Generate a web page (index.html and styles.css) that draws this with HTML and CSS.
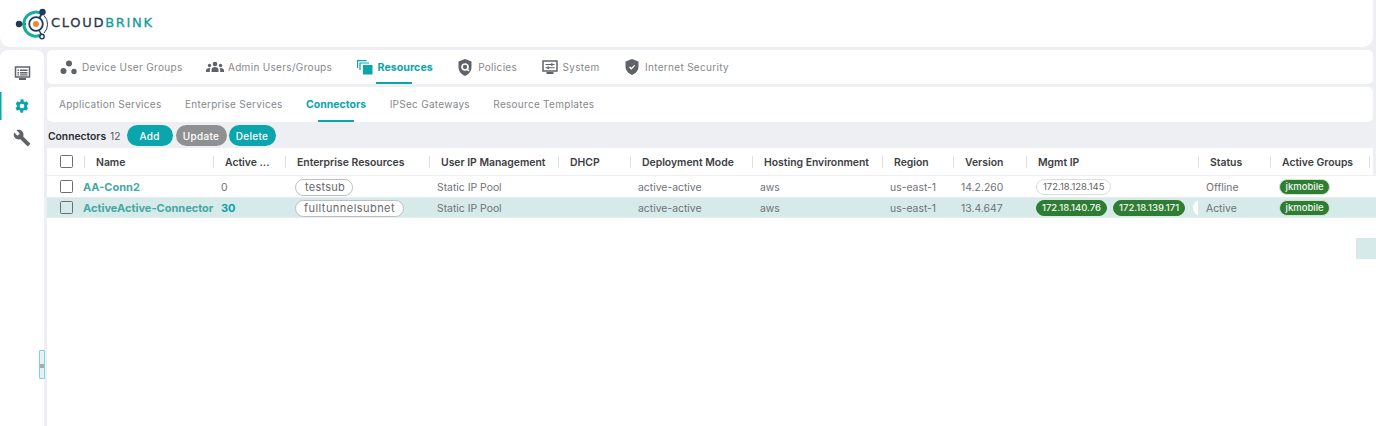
FILE: index.html
```html
<!DOCTYPE html>
<html lang="en">
<head>
<meta charset="utf-8">
<title>Cloudbrink Connectors</title>
<link rel="stylesheet" href="styles.css">
</head>
<body>
<header class="topbar">
  <div class="logo">
    <svg class="logo-mark" width="36" height="32" viewBox="0 0 36 32">
      <path d="M4 16H11" stroke="#1f3a5a" stroke-width="1.800"/>
      <circle cx="4" cy="16" r="3.200" fill="#1f3a5a"/>
      <path d="M28 6.500A12 12 0 1 0 27 26.400" fill="none" stroke="#14ad9f" stroke-width="3"/>
      <path d="M29 7.500A12.500 12.500 0 0 1 29 25" fill="none" stroke="#1f3a5a" stroke-width="1"/>
      <circle cx="21" cy="16" r="6.800" fill="#fff" stroke="#1f3a5a" stroke-width="1.800"/>
      <circle cx="21" cy="16" r="3" fill="#f08a2c"/>
      <path d="M24.500 10L27 5" stroke="#1f3a5a" stroke-width="1.800"/>
      <circle cx="27.500" cy="4" r="3.200" fill="#1f3a5a"/>
      <path d="M24 22L26.500 27" stroke="#1f3a5a" stroke-width="1.400"/>
      <circle cx="27" cy="28.500" r="2.200" fill="#fff" stroke="#1f3a5a" stroke-width="1.400"/>
    </svg>
    <span class="logo-text">CLOUD<span class="logo-accent">BRINK</span></span>
  </div>
</header>
<div class="shell">
  <aside class="rail">
    <button class="rail-item">
      <svg width="17" height="15" viewBox="0 0 17 15"><path fill="none" stroke="#5f6368" stroke-width="1.500" d="M1.500 1h14v10h-14z"/><path fill="#5f6368" d="M5 12h7v2H5zM3.500 3.500h1.500V5H3.500zM6 3.500h7.500V5H6zM3.500 6h1.500v1.500H3.500zM6 6h7.500v1.500H6zM3.500 8.300h1.500v1.200H3.500zM6 8.300h7.500v1.200H6z"/></svg>
    </button>
    <button class="rail-item rail-active">
      <svg width="16" height="16" viewBox="0 0 24 24"><path fill="#0aa5ad" d="M19.400 13c.1-.3.100-.7.100-1s0-.7-.1-1l2.100-1.600c.2-.2.200-.4.100-.6l-2-3.500c-.1-.2-.4-.3-.6-.2l-2.500 1c-.5-.4-1.100-.7-1.700-1L14 2.400c0-.2-.2-.4-.5-.4h-3c-.3 0-.5.200-.5.400l-.4 2.700c-.6.300-1.200.6-1.700 1l-2.500-1c-.2-.1-.5 0-.6.200l-2 3.500c-.1.200-.1.400.1.600L4.600 11c-.1.300-.1.700-.1 1s0 .7.100 1l-2.100 1.600c-.2.200-.2.400-.1.600l2 3.500c.1.200.4.300.6.200l2.500-1c.5.400 1.100.7 1.700 1l.4 2.700c0 .2.200.4.500.4h3c.3 0 .5-.2.500-.4l.4-2.700c.6-.3 1.200-.6 1.700-1l2.500 1c.2.100.5 0 .6-.2l2-3.500c.1-.2.100-.4-.1-.6zM12 15.500a3.500 3.500 0 1 1 0-7 3.500 3.500 0 0 1 0 7z"/></svg>
    </button>
    <button class="rail-item">
      <svg width="18" height="18" viewBox="0 0 24 24"><path fill="#5f6368" d="M22.700 19l-9.100-9.100c.9-2.300.4-5-1.500-6.900-2-2-5-2.400-7.400-1.300L9 6 6 9 1.600 4.700C.4 7.100.9 10.100 2.900 12.100c1.900 1.900 4.600 2.400 6.900 1.500l9.100 9.100c.4.400 1 .4 1.400 0l2.300-2.300c.5-.4.500-1.100.1-1.400z"/></svg>
    </button>
    <span class="rail-handle"></span>
  </aside>
  <main class="content">
    <nav class="tabs">
      <a class="tab">
        <svg width="18" height="15" viewBox="0 0 18 15"><g fill="#5f6368"><circle cx="9" cy="3.500" r="3"/><circle cx="3.500" cy="11" r="3"/><circle cx="14" cy="11.500" r="2.700"/></g></svg>
        Device User Groups
      </a>
      <a class="tab">
        <svg width="18" height="12" viewBox="0 0 18 12"><g fill="#5f6368"><circle cx="9" cy="3" r="2.300"/><path d="M5.500 11V9a3.500 3 0 0 1 7 0v2z"/><circle cx="3.500" cy="4.500" r="1.700"/><path d="M0 11V9.500c0-1.500 1.500-2.500 3.500-2.500.4 0 .7 0 1 .1-.5.600-.7 1.200-.7 1.900V11z"/><circle cx="14.500" cy="4.500" r="1.700"/><path d="M18 11V9.500c0-1.500-1.500-2.500-3.500-2.500-.4 0-.7 0-1 .1.500.6.700 1.200.7 1.900V11z"/></g></svg>
        Admin Users/Groups
      </a>
      <a class="tab tab-active">
        <svg width="18" height="15" viewBox="0 0 16 15"><path fill="none" stroke="#0aa5ad" stroke-width="1.200" d="M.6 8V.6h9M3 10V3h9"/><path fill="#0aa5ad" d="M6 5h9.500v9.500H6z"/></svg>
        Resources
      </a>
      <a class="tab">
        <svg width="18" height="17" viewBox="0 0 15 17"><path fill="#5f6368" d="M7.500 0L14 2.500v5.500c0 4-2.700 7.500-6.500 9C3.700 15.500 1 12 1 8V2.500z"/><circle cx="7.500" cy="8" r="3" fill="none" stroke="#fff" stroke-width="1.700"/><path d="M9.500 10l2 2" stroke="#fff" stroke-width="1.500"/></svg>
        Policies
      </a>
      <a class="tab">
        <svg width="18" height="15" viewBox="0 0 16 15"><path fill="none" stroke="#5f6368" stroke-width="1.500" d="M1 1h14v10H1z"/><path fill="#5f6368" d="M4.500 12h7v2h-7z"/><path stroke="#5f6368" stroke-width="1.100" d="M3.500 4.500h9M3.500 7.700h9"/><path fill="#5f6368" d="M9 3.300h1.600v2.400H9zM5.500 6.500h1.600v2.400H5.500z"/></svg>
        System
      </a>
      <a class="tab">
        <svg width="18" height="16" viewBox="0 0 14 16"><path fill="#5f6368" d="M7 0l6.500 2.500V7.500c0 3.800-2.700 7-6.500 8.500C3.200 14.500.5 11.300.5 7.500V2.500z"/><path fill="none" stroke="#fff" stroke-width="1.300" d="M4.500 8l1.800 1.800 3.400-3.400"/></svg>
        Internet Security
      </a>
    </nav>
    <nav class="subtabs">
      <a class="subtab">Application Services</a>
      <a class="subtab">Enterprise Services</a>
      <a class="subtab subtab-active">Connectors</a>
      <a class="subtab">IPSec Gateways</a>
      <a class="subtab">Resource Templates</a>
    </nav>
    <div class="toolbar">
      <span class="toolbar-title">Connectors</span>
      <span class="toolbar-count">12</span>
      <button class="btn btn-add">Add</button>
      <button class="btn btn-muted">Update</button>
      <button class="btn btn-delete">Delete</button>
    </div>
    <section class="table">
      <div class="row row-head">
        <div class="cell cell-check"><span class="check"></span></div>
        <div class="cell">Name</div>
        <div class="cell">Active ...</div>
        <div class="cell">Enterprise Resources</div>
        <div class="cell">User IP Management</div>
        <div class="cell">DHCP</div>
        <div class="cell">Deployment Mode</div>
        <div class="cell">Hosting Environment</div>
        <div class="cell">Region</div>
        <div class="cell">Version</div>
        <div class="cell">Mgmt IP</div>
        <div class="cell">Status</div>
        <div class="cell">Active Groups</div>
      </div>
      <div class="row">
        <div class="cell cell-check"><span class="check"></span></div>
        <div class="cell cell-name">AA-Conn2</div>
        <div class="cell">0</div>
        <div class="cell"><span class="pill pill-big pill-first">testsub</span></div>
        <div class="cell">Static IP Pool</div>
        <div class="cell"></div>
        <div class="cell">active-active</div>
        <div class="cell">aws</div>
        <div class="cell">us-east-1</div>
        <div class="cell">14.2.260</div>
        <div class="cell cell-ips"><span class="pill">172.18.128.145</span></div>
        <div class="cell">Offline</div>
        <div class="cell"><span class="pill pill-green pill-group">jkmobile</span></div>
      </div>
      <div class="row row-selected">
        <div class="cell cell-check"><span class="check"></span></div>
        <div class="cell cell-name">ActiveActive-Connector</div>
        <div class="cell cell-count">30</div>
        <div class="cell"><span class="pill pill-big">fulltunnelsubnet</span></div>
        <div class="cell">Static IP Pool</div>
        <div class="cell"></div>
        <div class="cell">active-active</div>
        <div class="cell">aws</div>
        <div class="cell">us-east-1</div>
        <div class="cell">13.4.647</div>
        <div class="cell cell-ips"><span class="pill pill-green">172.18.140.76</span><span class="pill pill-green">172.18.139.171</span><span class="pill pill-clip"></span></div>
        <div class="cell">Active</div>
        <div class="cell"><span class="pill pill-green pill-group">jkmobile</span></div>
      </div>
      <div class="stub"></div>
    </section>
  </main>
</div>
</body>
</html>
```
FILE: styles.css
```css
* { box-sizing: border-box; }
html, body { height: 100%; }
body {
  margin: 0;
  height: 426px;
  overflow: hidden;
  background: #eeeff3;
  font-family: Inter, "Liberation Sans", sans-serif;
  color: #6f7275;
  display: flex;
  flex-direction: column;
}
.topbar {
  height: 47px;
  margin-right: 3px;
  background: #fff;
  border-radius: 0 0 10px 10px;
  display: flex;
  align-items: center;
  padding-left: 15px;
  flex: none;
}
.logo { display: flex; align-items: center; }
.logo-text {
  font-family: "DejaVu Sans", "Liberation Sans", sans-serif;
  font-size: 13px;
  letter-spacing: 1.700px;
  -webkit-text-stroke: .3px currentColor;
  color: #27384a;
  margin-top: -2px;
}
.logo-accent { color: #129a9f; }
.shell { display: flex; flex: 1; margin-top: 3px; min-height: 0; }
.rail {
  width: 44px;
  flex: none;
  background: #fff;
  border-radius: 8px 8px 0 0;
  display: flex;
  flex-direction: column;
  gap: 4.500px;
  padding-top: 9px;
  position: relative;
}
.rail-item {
  height: 28px;
  padding: 0;
  border: 0;
  background: none;
  display: flex;
  align-items: center;
  justify-content: center;
}
.rail-active { box-shadow: inset 1.500px 0 0 #0aa5ad; }
.rail-handle {
  position: absolute;
  left: 39px;
  top: 300px;
  width: 6px;
  height: 29px;
  background: linear-gradient(#e6f0f5 0 13px, #a9acae 13px 17px, #e6f0f5 17px);
  border: 1px solid #79d4dc;
  border-radius: 1px;
}
.content {
  flex: 1;
  min-width: 0;
  margin-left: 3px;
  display: flex;
  flex-direction: column;
}
.tabs, .subtabs {
  flex: none;
  margin-right: 3px;
  background: #fff;
  border-radius: 5px;
  display: flex;
  align-items: stretch;
  font-size: 10px;
}
.tabs { height: 34px; padding-left: 13px; gap: 23.400px; letter-spacing: .32px; }
.subtabs { height: 35px; margin-top: 3px; padding-left: 12px; padding-bottom: 1px; gap: 23.500px; letter-spacing: .28px; }
.tab, .subtab {
  display: flex;
  align-items: center;
  position: relative;
  color: #85888a;
  white-space: nowrap;
}
.tab { gap: 4px; }
.tab svg { flex: none; }
.tab-active, .subtab-active {
  color: #0aa5ad;
  font-weight: 700;
  font-size: 10.500px;
  letter-spacing: 0;
}
.tab-active { font-size: 10.700px; }
.tab-active::after, .subtab-active::after {
  content: "";
  position: absolute;
  left: 50%;
  width: 36px;
  height: 2px;
  margin-left: -18px;
  background: #0aa5ad;
}
.tab-active::after { bottom: 0; }
.subtab-active::after { bottom: -1px; }
.toolbar {
  height: 26px;
  flex: none;
  display: flex;
  align-items: center;
  font-size: 10.300px;
  padding: 1px 0 0 1px;
}
.toolbar-title { color: #2a2d30; font-weight: 600; }
.toolbar-count { color: #55585b; margin-left: 4px; margin-right: 6px; }
.btn {
  height: 21px;
  padding: 0;
  border: 0;
  border-radius: 11px;
  background: #0aa5ad;
  color: #fff;
  font: 500 10px Inter, "Liberation Sans", sans-serif;
  letter-spacing: .3px;
}
.btn-add { width: 46px; margin-right: 3px; }
.btn-muted { background: #8f9092; width: 51px; margin-right: 2px; }
.btn-delete { width: 47px; }
.table {
  flex: 1;
  background: #fff;
  position: relative;
  font-size: 10.400px;
}
.row {
  display: grid;
  grid-template-columns: 37px 129px 72px 144px 129px 72px 122px 130px 71px 73px 172px 72px 100px;
  height: 21px;
  align-items: center;
}
.row-head {
  height: 28px;
  border-right: 3px solid #eeeff3;
  border-bottom: 1px solid #eeeff2;
  border-radius: 4px 0 0 0;
  color: #3d4043;
  font-weight: 600;
}
.row-head .cell {
  padding-left: 12px;
  padding-top: 1px;
  position: relative;
  overflow: visible;
}
.row-head .cell::before {
  content: "";
  position: absolute;
  left: 0;
  top: 1px;
  width: 1px;
  height: 12px;
  background: #dfe0e3;
}
.row-head .cell:last-child::after {
  content: "";
  position: absolute;
  right: 0;
  top: 1px;
  width: 1px;
  height: 12px;
  background: #dfe0e3;
}
.row-selected {
  background: #d6eaea;
  border-top: 1px solid #e4eeee;
  border-bottom: 1px solid #e4eeee;
}
.cell { padding-left: 8px; padding-top: 1px; white-space: nowrap; overflow: hidden; }
.row-head .cell-check, .cell-check { padding: 0 0 0 13px; display: flex; align-items: center; overflow: visible; }
.row-head .cell-check::before { left: 37px; }
.check { width: 13px; height: 13px; border: 1.500px solid #6b6e70; border-radius: 1.500px; }
.cell-name { padding-left: 0; margin-left: -1px; color: #45a8a3; font-weight: 700; font-size: 11px; overflow: visible; }
.cell-count { color: #0f9ea6; font-weight: 700; font-size: 11px; }
.pill {
  display: inline-block;
  height: 16px;
  line-height: 14px;
  padding: 0 6px;
  border: 1px solid #dcdde0;
  border-radius: 9px;
  background: #fff;
  color: #5f6265;
  font-size: 9.500px;
  vertical-align: middle;
}
.pill-big { height: 17px; padding: 0 8px; margin-left: 2px; font-size: 11px; letter-spacing: .45px; color: #66696c; border-color: #bcbec1; }
.pill-first { padding: 0 7px 0 9px; letter-spacing: .25px; }
.pill-green { padding: 0 5px; background: #2f7d32; border-color: #2f7d32; color: #eef6ee; font-weight: 500; }
.pill-group { padding: 0 5.500px; margin-left: 1px; border-color: #cfe3d3; }
.cell-ips { display: flex; gap: 6px; align-items: center; padding-left: 10px; }
.cell-ips .pill { flex: none; }
.pill-clip { border: 0; width: 30px; margin-left: 2px; }
.stub { position: absolute; right: 0; top: 90px; width: 20px; height: 21px; background: #d6eaea; }
```
